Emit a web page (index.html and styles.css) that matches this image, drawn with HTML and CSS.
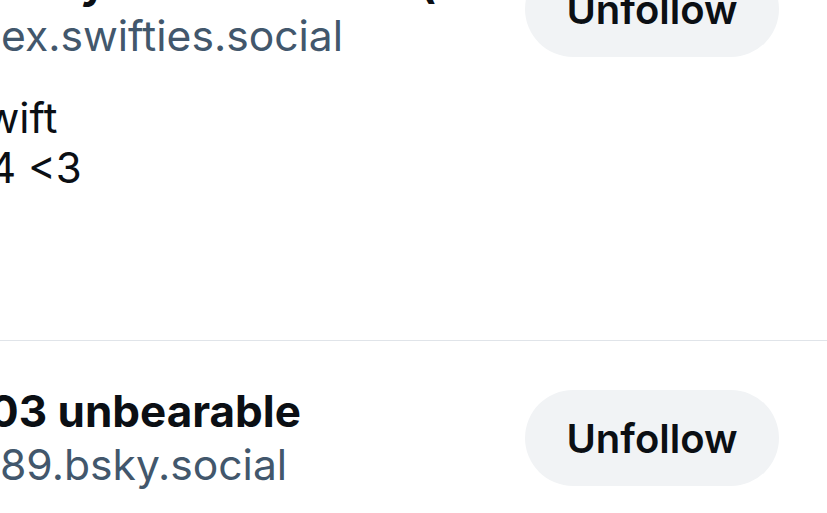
FILE: index.html
```html
<!DOCTYPE html>
<html>
<head>
<meta charset="utf-8">
<link rel="stylesheet" href="styles.css">
</head>
<body>
<div class="list">
  <div class="row row-first">
    <div class="content">
      <div class="name"><span class="shift shift-name1">Emily Anderson Hal (</span></div>
      <div class="handle">ex.swifties.social</div>
      <div class="bio">
        <div class="line"><span class="shift shift-w">wift</span></div>
        <div class="line"><span class="shift shift-4">4 &lt;3</span></div>
      </div>
    </div>
    <button class="btn">Unfollow</button>
  </div>
  <div class="row">
    <div class="content">
      <div class="name"><span class="shift shift-0">03 unbearable</span></div>
      <div class="handle"><span class="shift shift-8">89.bsky.social</span></div>
    </div>
    <button class="btn">Unfollow</button>
  </div>
</div>
</body>
</html>
```
FILE: styles.css
```css
html, body {
  margin: 0;
  padding: 0;
  background: #ffffff;
  overflow: hidden;
  width: 827px;
  height: 513px;
}
body {
  font-family: Inter, "Noto Sans", sans-serif;
  color: #0b0f14;
}
.list {
  margin-top: -88px;
}
.row {
  display: flex;
  align-items: flex-start;
  justify-content: space-between;
  padding: 46px 48px 147px 0;
  border-top: 1px solid #e0e4e9;
}
.row-first {
  border-top: none;
}
.content {
  flex: 1;
  min-width: 0;
  overflow: hidden;
}
.name {
  font-size: 44px;
  font-weight: 700;
  line-height: 48px;
  white-space: nowrap;
}
.handle {
  margin-top: 4px;
  font-size: 42.6px;
  line-height: 52px;
  color: #42576c;
  white-space: nowrap;
  padding-left: 1px;
}
.bio {
  margin-top: 31px;
  font-size: 42px;
  line-height: 50px;
}
.line {
  white-space: nowrap;
}
.shift {
  display: inline-block;
}
.shift-name1 { margin-left: -11px; }
.shift-w { margin-left: -15px; }
.shift-4 { margin-left: -11px; }
.shift-0 { margin-left: -11px; }
.shift-8 { margin-left: -1px; }
.btn {
  flex: none;
  margin-top: 3px;
  width: 254px;
  height: 96px;
  border: none;
  border-radius: 48px;
  background: #f1f3f5;
  color: #0b0f14;
  font-family: Inter, "Noto Sans", sans-serif;
  font-size: 40px;
  font-weight: 600;
  padding: 0;
}
```
